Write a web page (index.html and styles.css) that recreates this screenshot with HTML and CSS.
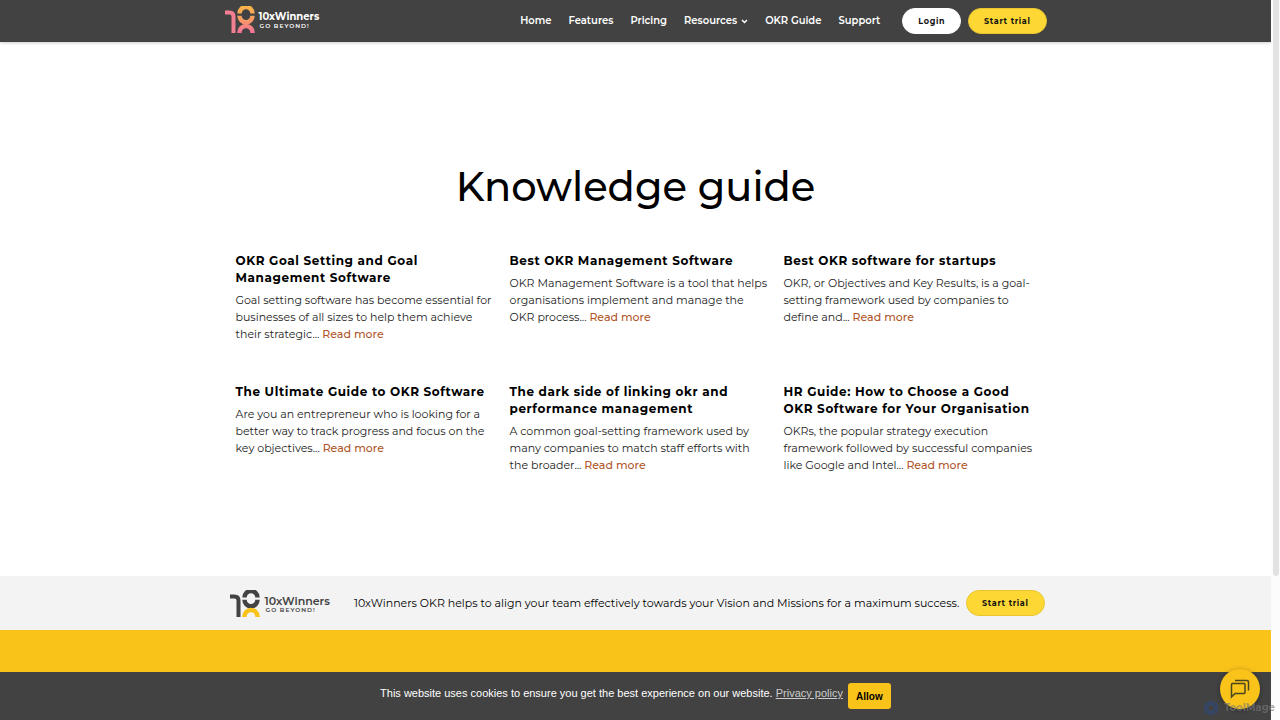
FILE: index.html
```html
<!DOCTYPE html>
<html lang="en">
<head>
<meta charset="utf-8">
<meta name="viewport" content="width=device-width, initial-scale=1">
<title>Knowledge guide - 10xWinners</title>
<link rel="stylesheet" href="styles.css">
</head>
<body>
<div class="page">
  <header class="header">
    <div class="container header-inner">
      <a class="logo logo-light" href="#">
        <svg class="logo-mark" viewBox="0 0 30 27" aria-hidden="true">
          <defs><linearGradient id="warm" gradientUnits="userSpaceOnUse" x1="0" y1="0" x2="0" y2="27"><stop offset="0" stop-color="#f9b548"/><stop offset="0.500" stop-color="#f99a62"/><stop offset="1" stop-color="#f4709e"/></linearGradient></defs>
          <g fill="none" stroke="url(#warm)" stroke-width="4.500">
            <path d="M0 6.500H4.500Q8.500 6.500 8.500 10.500V27" stroke="#f37f92" stroke-width="4"/>
            <path d="M14.500 7.500A6.500 6.500 0 0 1 27.500 7.500M14.500 9.800A6.500 6.500 0 0 0 27.500 9.800"/>
            <path d="M14.500 27V26.500A6.500 6.500 0 0 1 27.500 26.500V27"/>
          </g>
        </svg>
        <span class="logo-text"><span class="logo-name">10xWinners</span><span class="logo-tag">GO BEYOND!</span></span>
      </a>
      <nav class="nav">
        <a href="#">Home</a>
        <a href="#">Features</a>
        <a href="#">Pricing</a>
        <a class="has-menu" href="#">Resources<svg class="chevron" viewBox="0 0 7 5" aria-hidden="true"><path d="M1 1l2.500 2.500L6 1"/></svg></a>
        <a href="#">OKR Guide</a>
        <a href="#">Support</a>
      </nav>
      <div class="actions">
        <button class="pill pill-white" type="button">Login</button>
        <button class="pill" type="button">Start trial</button>
      </div>
    </div>
  </header>
  <main class="container main">
    <h1>Knowledge guide</h1>
    <div class="articles">
      <article><h2>OKR Goal Setting and Goal<br>Management Software</h2>
        <p>Goal setting software has become essential for<br>businesses of all sizes to help them achieve<br>their strategic... <a href="#">Read more</a></p></article>
      <article><h2>Best OKR Management Software</h2>
        <p>OKR Management Software is a tool that helps<br>organisations implement and manage the<br>OKR process... <a href="#">Read more</a></p></article>
      <article><h2>Best OKR software for startups</h2>
        <p>OKR, or Objectives and Key Results, is a goal-<br>setting framework used by companies to<br>define and... <a href="#">Read more</a></p></article>
      <article><h2>The Ultimate Guide to OKR Software</h2>
        <p>Are you an entrepreneur who is looking for a<br>better way to track progress and focus on the<br>key objectives... <a href="#">Read more</a></p></article>
      <article><h2>The dark side of linking okr and<br>performance management</h2>
        <p>A common goal-setting framework used by<br>many companies to match staff efforts with<br>the broader... <a href="#">Read more</a></p></article>
      <article><h2>HR Guide: How to Choose a Good<br>OKR Software for Your Organisation</h2>
        <p>OKRs, the popular strategy execution<br>framework followed by successful companies<br>like Google and Intel... <a href="#">Read more</a></p></article>
    </div>
  </main>
  <section class="promo">
    <div class="container promo-inner">
      <a class="logo logo-dark" href="#">
        <svg class="logo-mark" viewBox="0 0 30 27" aria-hidden="true">
          <g fill="none" stroke="#424242" stroke-width="4.500">
            <path d="M0 6.500H4.500Q8.500 6.500 8.500 10.500V27" stroke-width="4"/>
            <path d="M14.500 7.500A6.500 6.500 0 0 1 27.500 7.500M14.500 9.800A6.500 6.500 0 0 0 27.500 9.800"/>
            <path d="M14.500 27V26.500A6.500 6.500 0 0 1 27.500 26.500V27" stroke="#f9c31a"/>
          </g>
        </svg>
        <span class="logo-text"><span class="logo-name">10xWinners</span><span class="logo-tag">GO BEYOND!</span></span>
      </a>
      <p>10xWinners OKR helps to align your team effectively towards your Vision and Missions for a maximum success.</p>
      <button class="pill" type="button">Start trial</button>
    </div>
  </section>
  <footer class="footer"></footer>
</div>
<div class="scrollbar" aria-hidden="true"><div class="thumb"></div></div>
<div class="cookies">
  <p>This website uses cookies to ensure you get the best experience on our website. <a href="#">Privacy policy</a></p>
  <button class="allow" type="button">Allow</button>
</div>
<button class="chat" type="button" aria-label="Open chat">
  <svg viewBox="0 0 20 20" aria-hidden="true"><path d="M1.500 5.500Q1.500 4.500 2.500 4.500H14Q15 4.500 15 5.500V13.500Q15 14.500 14 14.500H5L1.500 18zM5 1.500H17Q18.500 1.500 18.500 3V11.500"/></svg>
</button>
<div class="watermark">
  <svg viewBox="0 0 16 16" aria-hidden="true"><g fill="none" stroke="currentColor" stroke-width="1.500"><ellipse cx="8" cy="8" rx="3.500" ry="7"/><ellipse cx="8" cy="8" rx="3.500" ry="7" transform="rotate(60 8 8)"/><ellipse cx="8" cy="8" rx="3.500" ry="7" transform="rotate(120 8 8)"/></g></svg>
  <span>ToolMage</span>
</div>
</body>
</html>
```
FILE: styles.css
```css
* { box-sizing: border-box; }
body {
  margin: 0;
  min-height: 100vh;
  overflow: hidden;
  background: #fff;
  color: #000;
  font-family: Montserrat, Inter, "Open Sans", sans-serif;
}
a { color: inherit; text-decoration: none; }
h1, h2, p { margin: 0; }
button { font-family: inherit; cursor: pointer; }

.page {
  display: flex;
  flex-direction: column;
  min-height: 100vh;
  margin-right: 9px;
}
.container { width: 100%; max-width: 822px; margin: 0 auto; }

.header { background: #424242; box-shadow: 0 1px 3px rgba(0, 0, 0, 0.2); }
.header-inner { display: flex; align-items: center; height: 42px; }
.logo { display: flex; gap: 4px; align-items: center; }
.logo-mark { width: 30px; height: 27px; flex: none; }
.logo-text { display: flex; flex-direction: column; padding-top: 2px; }
.logo-name { font-size: 11px; line-height: 12px; font-weight: 600; }
.logo-tag { padding-left: 1px; font-size: 6px; line-height: 6px; font-weight: 600; letter-spacing: 1px; }
.logo-light { color: #fff; padding-bottom: 4px; }
.logo-light .logo-name { font-size: 10px; font-weight: 700; }
.logo-dark { gap: 5px; color: #424242; }
.nav {
  display: flex;
  gap: 19px;
  margin-left: auto;
  color: #fff;
  font-size: 10px;
  line-height: 16px;
  font-weight: 600;
}
.nav { gap: 17px; }
.has-menu { display: flex; align-items: center; gap: 4px; }
.chevron { width: 7px; height: 5px; fill: none; stroke: #fff; stroke-width: 1.5; }
.actions { display: flex; gap: 7px; margin-left: 22px; }
.pill {
  height: 26px;
  padding: 0 15px;
  border: 1px solid #e8c62f;
  border-radius: 13px;
  background: #fdd835;
  color: #111;
  font-size: 8px;
  font-weight: 700;
  letter-spacing: 0.08em;
  white-space: nowrap;
}
.pill-white { border-color: #fff; background: #fff; }

.main { flex: none; padding: 115px 11px 102px; }
h1 { font-size: 40px; line-height: 59px; font-weight: 500; text-align: center; }
.articles {
  display: grid;
  grid-template-columns: repeat(3, minmax(0, 1fr));
  gap: 40px 22px;
  padding-top: 36px;
}
.articles h2 {
  margin-bottom: 6px;
  font-size: 12px;
  line-height: 17px;
  font-weight: 700;
  letter-spacing: 0.05em;
  white-space: nowrap;
}
.articles p { font-size: 11px; line-height: 17px; color: #222; white-space: nowrap; }
.articles a { color: #b0562a; font-weight: 500; }

.promo { background: #f3f3f3; }
.promo-inner { display: flex; align-items: center; height: 54px; padding: 0 2px 0 5px; }
.promo p { margin-left: 24px; font-size: 11px; line-height: 17px; white-space: nowrap; }
.promo .pill { margin-left: auto; }
.footer { flex: 1; background: #f9c31a; }

.scrollbar { position: fixed; top: 0; right: 0; bottom: 0; width: 9px; background: #fcfcfc; }
.thumb { width: 6px; height: 80%; margin: 0 auto; border-radius: 0 0 3px 3px; background: #e2e2e2; }

.cookies {
  position: fixed;
  right: 9px;
  bottom: 0;
  left: 0;
  display: flex;
  justify-content: center;
  gap: 5px;
  height: 48px;
  padding-top: 11px;
  background: #424242;
  color: #fff;
  font-family: "Liberation Sans", Arial, sans-serif;
}
.cookies p { font-size: 11px; line-height: 20px; }
.cookies a { color: #ccc; text-decoration: underline; }
.allow {
  height: 26px;
  width: 43px;
  padding: 0;
  border: 0;
  border-radius: 3px;
  background: #f9c31a;
  color: #000;
  font-size: 10px;
  font-weight: 700;
}
.chat {
  position: fixed;
  right: 20px;
  bottom: 11px;
  display: grid;
  place-items: center;
  width: 40px;
  height: 40px;
  padding: 0;
  border: 0;
  border-radius: 50%;
  background: #f9c31a;
  box-shadow: 0 1px 5px rgba(0, 0, 0, 0.35);
}
.chat svg { width: 20px; height: 20px; fill: none; stroke: #49451f; stroke-width: 1.5; }
.watermark {
  position: fixed;
  right: 5px;
  bottom: 4px;
  display: flex;
  align-items: center;
  gap: 5px;
  color: rgba(120, 120, 120, 0.65);
  font-size: 10px;
  line-height: 16px;
  font-weight: 700;
  pointer-events: none;
}
.watermark svg { width: 16px; height: 16px; color: #35476b; }
```
